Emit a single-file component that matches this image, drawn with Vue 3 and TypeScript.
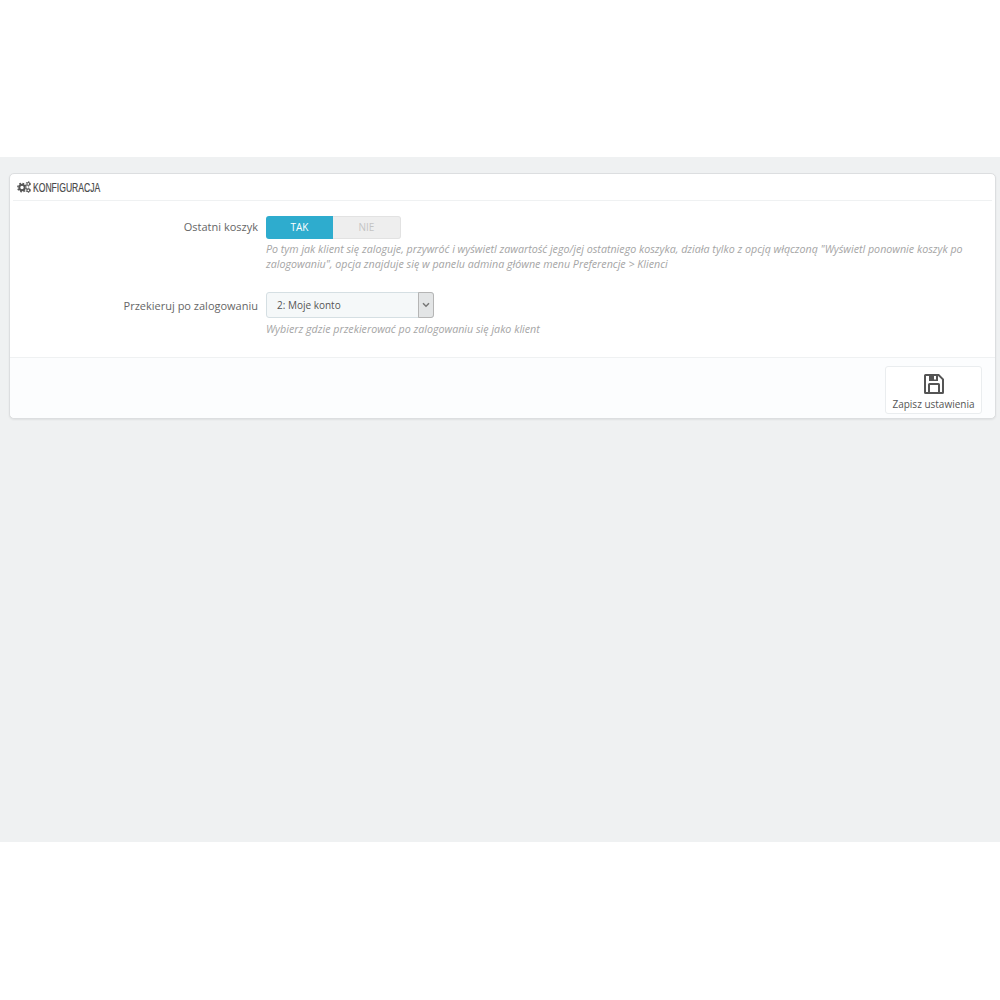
<template>
  <div class="page">
    <div class="top-space"></div>
    <main class="content">
      <section class="panel">
        <h3 class="panel-heading">
          <svg class="cogs" viewBox="0 0 14 12" width="14" height="12" aria-hidden="true">
            <g fill="none" stroke="#555">
              <circle cx="5" cy="6.5" r="2.7" stroke-width="2" />
              <circle cx="5" cy="6.5" r="4.2" stroke-width="1.4" stroke-dasharray="1.7 1.6" />
              <circle cx="11.3" cy="2.9" r="1.4" stroke-width="1.1" />
              <circle cx="11.3" cy="2.9" r="2.3" stroke-width="0.9" stroke-dasharray="1.2 1.2" />
              <circle cx="11.3" cy="9.3" r="1.4" stroke-width="1.1" />
              <circle cx="11.3" cy="9.3" r="2.3" stroke-width="0.9" stroke-dasharray="1.2 1.2" />
            </g>
          </svg>
          <span class="heading-text">Konfiguracja</span>
        </h3>

        <div class="form-body">
          <div class="form-row toggle-row">
            <label class="form-label">Ostatni koszyk</label>
            <div class="form-control">
              <div class="switch">
                <span class="switch-on">TAK</span>
                <span class="switch-off">NIE</span>
              </div>
              <p class="help">
                Po tym jak klient się zaloguje, przywróć i wyświetl zawartość jego/jej ostatniego koszyka, działa tylko z opcją włączoną "Wyświetl ponownie koszyk po zalogowaniu", opcja znajduje się w panelu admina główne menu Preferencje &gt; Klienci
              </p>
            </div>
          </div>

          <div class="form-row">
            <label class="form-label select-label">Przekieruj po zalogowaniu</label>
            <div class="form-control">
              <div class="select-box">
                <span class="select-value">2: Moje konto</span>
                <span class="select-arrow">
                  <svg viewBox="0 0 8 6" width="8" height="6" aria-hidden="true">
                    <path d="M1 1.2l3 3 3-3" fill="none" stroke="#777" stroke-width="1.5" />
                  </svg>
                </span>
              </div>
              <p class="help select-help">Wybierz gdzie przekierować po zalogowaniu się jako klient</p>
            </div>
          </div>
        </div>

        <div class="panel-footer">
          <button class="save-btn" type="button">
            <svg class="save-icon" viewBox="0 0 22 22" width="22" height="22" aria-hidden="true">
              <path fill-rule="evenodd" fill="#555" d="M2.5 1H16l5 5v13.5a1.5 1.5 0 0 1-1.5 1.5h-17A1.5 1.5 0 0 1 1 19.500v-17A1.500 1.500 0 0 1 2.500 1zM3 3v16h2v-7.500A1.500 1.500 0 0 1 6.500 10h9a1.500 1.500 0 0 1 1.500 1.500V19h2V6.800L15.200 3H15v5H6V3zM7 12v7h8v-7zM11 3v3.500H13V3z" />
            </svg>
            <span>Zapisz ustawienia</span>
          </button>
        </div>
      </section>
    </main>
    <div class="bottom-space"></div>
  </div>
</template>

<script setup lang="ts">
</script>

<style>
html,
body {
  margin: 0;
  background: #fff;
}
</style>

<style scoped>
.page {
  width: 1000px;
  height: 1000px;
  display: flex;
  flex-direction: column;
  font-family: "Open Sans", "Noto Sans", sans-serif;
  color: #555;
}

.top-space {
  height: 157px;
}

.bottom-space {
  height: 158px;
}

.content {
  height: 685px;
  background: #eff1f2;
  padding: 16px 4px 0 9px;
  box-sizing: border-box;
}

.panel {
  height: 246px;
  box-sizing: border-box;
  display: flex;
  flex-direction: column;
  background: #fff;
  border: 1px solid #dcdee0;
  border-radius: 5px;
  box-shadow: 0 1px 2px rgba(0, 0, 0, 0.07);
}

.panel-heading {
  height: 27px;
  box-sizing: border-box;
  margin: 0 3px;
  padding: 0 4px;
  display: flex;
  align-items: center;
  gap: 2px;
  border-bottom: 1px solid #eff1f2;
  font-family: "Liberation Sans", sans-serif;
  font-size: 13px;
  font-weight: 400;
  text-transform: uppercase;
  color: #4a4a4a;
}

/* no condensed family installed, squeeze the regular one */
.heading-text {
  display: inline-block;
  transform: scaleX(0.66);
  transform-origin: left center;
  -webkit-text-stroke: 0.2px #4a4a4a;
}

.form-body {
  flex: 1;
  padding-top: 15px;
}

.form-row {
  display: grid;
  grid-template-columns: 248px 1fr;
  column-gap: 8px;
}

.toggle-row {
  margin-bottom: 20px;
}

.form-label {
  text-align: right;
  font-size: 11px;
  line-height: 22px;
  color: #666;
}

.select-label {
  line-height: 27px;
}

.switch {
  display: flex;
  width: 135px;
  height: 23px;
  font-size: 10px;
  line-height: 23px;
  text-align: center;
}

.switch-on {
  width: 67px;
  background: #2eacce;
  color: #fff;
  border-radius: 3px 0 0 3px;
}

.switch-off {
  flex: 1;
  background: #eeeeee;
  color: #c4c4c4;
  border: 1px solid #e2e2e2;
  border-left: 0;
  border-radius: 0 3px 3px 0;
  line-height: 21px;
}

.help {
  margin: 3px 0 0;
  width: 712px;
  font-size: 10.7px;
  line-height: 15px;
  font-style: italic;
  color: #a5a5a5;
}

.select-help {
  margin-top: 4px;
}

.select-box {
  width: 168px;
  height: 26px;
  box-sizing: border-box;
  display: flex;
  background: #f5f8f9;
  border: 1px solid #d5dfe3;
  border-radius: 3px;
}

.select-value {
  flex: 1;
  padding-left: 10px;
  font-size: 10px;
  font-weight: 500;
  line-height: 25px;
  color: #555;
}

.select-arrow {
  width: 14px;
  display: flex;
  align-items: center;
  justify-content: center;
  background: #e3e5e6;
  border: 1px solid #b5b5b5;
  margin: -1px -1px -1px 0;
  border-radius: 0 3px 3px 0;
}

.panel-footer {
  height: 61px;
  box-sizing: border-box;
  display: flex;
  justify-content: flex-end;
  padding: 8px 13px 0 0;
  background: #fcfdfe;
  border-top: 1px solid #eff1f2;
  border-radius: 0 0 5px 5px;
}

.save-btn {
  width: 97px;
  height: 48px;
  box-sizing: border-box;
  padding: 6px 0 0;
  display: flex;
  flex-direction: column;
  align-items: center;
  background: #fff;
  border: 1px solid #eaedef;
  border-radius: 3px;
  font-family: inherit;
  font-size: 10px;
  color: #555;
}

.save-icon {
  margin-bottom: 2px;
}
</style>
